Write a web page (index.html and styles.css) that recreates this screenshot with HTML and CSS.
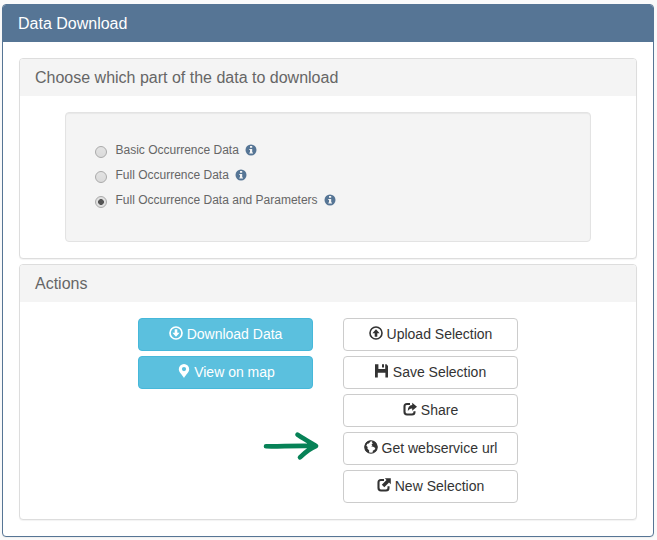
FILE: index.html
```html
<!DOCTYPE html>
<html lang="en">
<head>
<meta charset="utf-8">
<title>Data Download</title>
<link rel="stylesheet" href="styles.css">
</head>
<body>
<main class="panel primary">
  <h1 class="heading">Data Download</h1>
  <div class="primary-body">
    <section class="panel choose">
      <h2 class="heading">Choose which part of the data to download</h2>
      <div class="well">
        <label class="option"><input type="radio" name="part"><span>Basic Occurrence Data</span><svg class="info" viewBox="0 0 12 12"><circle cx="6" cy="6" r="5.5"/><path d="M5 2h2.2v1.8H5zM4.3 4.9h2.9v3.5H8v1H4.3v-1H5V5.9h-.7z"/></svg></label>
        <label class="option"><input type="radio" name="part"><span>Full Occurrence Data</span><svg class="info" viewBox="0 0 12 12"><circle cx="6" cy="6" r="5.5"/><path d="M5 2h2.2v1.8H5zM4.3 4.9h2.9v3.5H8v1H4.3v-1H5V5.9h-.7z"/></svg></label>
        <label class="option"><input type="radio" name="part" checked><span>Full Occurrence Data and Parameters</span><svg class="info" viewBox="0 0 12 12"><circle cx="6" cy="6" r="5.5"/><path d="M5 2h2.2v1.8H5zM4.3 4.9h2.9v3.5H8v1H4.3v-1H5V5.9h-.7z"/></svg></label>
      </div>
    </section>
    <section class="panel actions">
      <h2 class="heading">Actions</h2>
      <div class="columns">
        <div class="column">
          <button class="btn info-btn"><svg class="icon" viewBox="0 0 14 14"><circle cx="7" cy="7" r="6" fill="none" stroke="currentColor" stroke-width="1.7"/><path d="M5.7 3.2h2.6v3.6h2.3L7 10.8 3.4 6.8h2.3z"/></svg>Download Data</button>
          <button class="btn info-btn"><svg class="icon" viewBox="0 0 14 14"><path fill-rule="evenodd" d="M8 0a5.2 5.2 0 0 1 5.2 5.2c0 3-3.4 5.4-5.2 8.8-1.8-3.4-5.2-5.8-5.2-8.8A5.2 5.2 0 0 1 8 0zm0 3a2.1 2.1 0 1 0 0 4.2A2.1 2.1 0 0 0 8 3z"/></svg>View on map</button>
          <svg class="arrow" viewBox="0 0 56 32"><path d="M4 17.3C17 17.8 31 16.3 54 17M35.5 5.7C40 9 48 13 54 17M38 28.3C43 23.5 47.5 19.5 54 17"/></svg>
        </div>
        <div class="column">
          <button class="btn"><svg class="icon" viewBox="0 0 14 14"><circle cx="7" cy="7" r="6" fill="none" stroke="currentColor" stroke-width="1.6"/><path d="M5.7 10.7h2.6V7.2h2.3L7 3.2 3.4 7.2h2.3z"/></svg>Upload Selection</button>
          <button class="btn"><svg class="icon" viewBox="0 0 14 14"><path d="M0 .3h3.4v5h6.8v-5h1.3L13 2.1v11.4h-2.6V8.5H2.8v5H0zM2.5 5h8v3.8h-8zM7 .3h2v3.2H7z"/></svg>Save Selection</button>
          <button class="btn"><svg class="icon" viewBox="0 0 14 14"><path d="M7 2H4Q1.5 2 1.5 4.5v5.3Q1.5 12.5 4 12.5h5q2.5 0 2.5-2.5V9.2" fill="none" stroke="currentColor" stroke-width="2.1"/><path d="M9.2.7 14 4.7 9.2 8.8V6.5C7.2 6.4 6 7.2 4.8 9.2c0-4 1.5-6 4.4-6.2z"/></svg>Share</button>
          <button class="btn"><svg class="icon" viewBox="0 0 14 14"><circle cx="7" cy="7" r="6.2" fill="none" stroke="currentColor" stroke-width="1.1"/><path d="M7 .6C3 .6.6 3.7.6 7c0 2.7 1.8 5.2 4.3 6l.3-2.6-1.8-1.8.3-1.5-1.4-1.3 1-2 1.5-.2 1.1-1.3zM8.6 1l-.8 1.3 1 .9L7.5 4.8l.9.9-1.3 1.2 1.7-.3 2.5 1.5-.5 1.4-2 1.3-.1 2c2.8-.7 4.7-3 4.7-5.8 0-2.9-2-5.3-4.8-6z"/></svg>Get webservice url</button>
          <button class="btn"><svg class="icon" viewBox="0 0 14 14"><path d="M7 2H4Q1.5 2 1.5 4.5v5.3Q1.5 12.5 4 12.5h5q2.5 0 2.5-2.5V8.2" fill="none" stroke="currentColor" stroke-width="2.1"/><path d="M7.8.3h6v6L12 4.6 7.3 9.3 4.8 6.8l4.7-4.7z"/></svg>New Selection</button>
        </div>
      </div>
    </section>
  </div>
</main>
</body>
</html>
```
FILE: styles.css
```css
* { box-sizing: border-box; }
body {
  margin: 0;
  padding: 4px 3px 3px 2px;
  height: 540px;
  background: #fafafa;
  color: #666;
  font: 14px/20px "Liberation Sans", Arial, sans-serif;
}
.panel {
  background: #fff;
  border: 1px solid #ddd;
  border-radius: 4px;
  box-shadow: 0 1px 1px rgba(0, 0, 0, .05);
}
.heading {
  margin: 0;
  height: 37px;
  padding: 10px 15px 0;
  border-radius: 3px 3px 0 0;
  background: #f4f4f4;
  font-size: 16px;
  font-weight: 400;
  line-height: 18px;
}
.primary { height: 533px; border-color: #567595; }
.primary > .heading { background: #567595; color: #fff; }
.primary-body { padding: 16px; }
.choose { height: 201px; margin-bottom: 5px; }
.well {
  width: 526px;
  height: 130px;
  margin: 16px 0 0 45px;
  padding: 25px 29px;
  background: #f4f4f4;
  border: 1px solid #e3e3e3;
  border-radius: 4px;
  box-shadow: inset 0 1px 1px rgba(0, 0, 0, .05);
}
.option {
  display: flex;
  align-items: flex-start;
  height: 25px;
  font-size: 12px;
  line-height: 24px;
}
.option input {
  appearance: none;
  width: 12px;
  height: 12px;
  margin: 8px 8.5px 0 0;
  border: 1px solid #aaa;
  border-radius: 50%;
  background: linear-gradient(#e3e3e3, #dadada);
}
.option input:checked { background: radial-gradient(circle, #555 2.6px, #e0e0e0 3.2px); }
.info { width: 12px; height: 12px; margin: 6px 0 0 6.3px; fill: #567595; }
.info path { fill: #f4f4f4; }
.actions { height: 256px; }
.columns { display: flex; gap: 30px; padding: 16px 0 0 118px; }
.column { display: flex; flex-direction: column; gap: 5px; width: 175px; }
.btn {
  display: flex;
  justify-content: center;
  align-items: center;
  height: 33px;
  padding: 0 0 1px;
  border: 1px solid #ccc;
  border-radius: 4px;
  background: #fff;
  color: #333;
  font: inherit;
}
.info-btn { background: #5bc0de; border-color: #46b8da; color: #fff; }
.icon { width: 14px; height: 14px; margin: -2px 4px 0 0; fill: currentColor; }
.arrow {
  width: 56px;
  height: 32px;
  margin: 34.5px 0 0 123.7px;
  fill: none;
  stroke: #078257;
  stroke-width: 4.6;
  stroke-linecap: round;
  stroke-linejoin: round;
  overflow: visible;
}
```
